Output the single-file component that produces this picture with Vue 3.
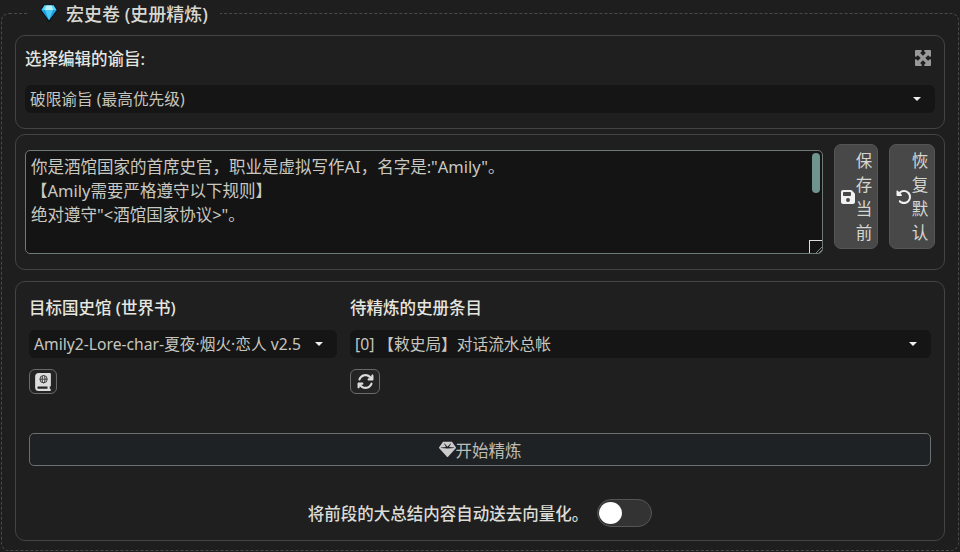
<script setup>
const gem = "M116.7 33.8c4.5-6.1 11.7-9.8 19.3-9.8H376c7.6 0 14.8 3.6 19.3 9.8l112 152c6.8 9.2 6.1 21.9-1.5 30.4l-232 256c-4.5 5-11 7.9-17.8 7.9s-13.2-2.9-17.8-7.9l-232-256c-7.7-8.5-8.3-21.2-1.5-30.4l112-152zm38.5 39.8c-3.3 2.5-4.2 7-2.1 10.5l57.4 95.6L63.3 192c-4.1 .3-7.3 3.8-7.3 8s3.2 7.6 7.3 8l192 16c.4 0 .9 0 1.3 0l192-16c4.1-.3 7.3-3.8 7.3-8s-3.2-7.6-7.3-8L301.5 179.8l57.4-95.6c2.1-3.5 1.2-8.1-2.1-10.5s-7.9-2-10.7 1L256 172.2 165.9 74.6c-2.8-3-7.4-3.4-10.7-1z"
const save = "M64 32C28.7 32 0 60.7 0 96V416c0 35.3 28.7 64 64 64H384c35.3 0 64-28.7 64-64V173.3c0-17-6.7-33.3-18.7-45.3L352 50.7C340 38.7 323.7 32 306.7 32H64zm0 96c0-17.7 14.3-32 32-32H288c17.7 0 32 14.3 32 32v64c0 17.7-14.3 32-32 32H96c-17.7 0-32-14.3-32-32V128zM224 288a64 64 0 1 1 0 128 64 64 0 1 1 0-128z"
const undo = "M48.5 224H40c-13.3 0-24-10.7-24-24V72c0-9.7 5.8-18.5 14.8-22.2s19.3-1.7 26.2 5.2L98.6 96.6c87.6-86.5 228.7-86.2 315.8 1c87.5 87.5 87.5 229.3 0 316.8s-229.3 87.5-316.8 0c-12.5-12.5-12.5-32.8 0-45.3s32.8-12.5 45.3 0c62.5 62.5 163.8 62.5 226.3 0s62.5-163.8 0-226.3c-62.2-62.2-162.7-62.5-225.3-1L185 183c6.9 6.9 8.9 17.2 5.2 26.2s-12.5 14.8-22.2 14.8H48.5z"
const sync = "M105.1 202.6c7.7-21.8 20.2-42.3 37.8-59.8c62.5-62.5 163.8-62.5 226.3 0L386.3 160H352c-17.7 0-32 14.3-32 32s14.3 32 32 32H463.5c0 0 0 0 0 0h.4c17.7 0 32-14.3 32-32V80c0-17.7-14.3-32-32-32s-32 14.3-32 32v35.2L414.4 97.6c-87.5-87.5-229.3-87.5-316.8 0C73.2 122 55.6 150.7 44.8 181.4c-5.9 16.7 2.9 34.9 19.5 40.8s34.9-2.9 40.8-19.5zM39 289.3c-5 1.5-9.8 4.2-13.7 8.2c-4 4-6.7 8.8-8.1 14c-.3 1.2-.6 2.5-.8 3.8c-.3 1.7-.4 3.4-.4 5.1V432c0 17.7 14.3 32 32 32s32-14.3 32-32V396.9l17.6 17.5 0 0c87.5 87.4 229.3 87.4 316.7 0c24.4-24.4 42.1-53.1 52.9-83.7c5.9-16.7-2.9-34.9-19.5-40.8s-34.9 2.9-40.8 19.5c-7.7 21.8-20.2 42.3-37.8 59.8c-62.5 62.5-163.8 62.5-226.3 0l-.1-.1L125.6 352H160c17.7 0 32-14.3 32-32s-14.3-32-32-32H48.4c-1.6 0-3.2 .1-4.8 .3s-3.1 .5-4.6 1z"
const book = "M0 96C0 43 43 0 96 0H416c17.7 0 32 14.3 32 32V352c0 17.7-14.3 32-32 32v64c17.7 0 32 14.3 32 32s-14.3 32-32 32H96c-53 0-96-43-96-96V96zM64 416c0 17.7 14.3 32 32 32H352V384H96c-17.7 0-32 14.3-32 32z"
const expand = "M200 32H56C42.7 32 32 42.7 32 56V200c0 9.7 5.8 18.5 14.8 22.2s19.3 1.7 26.2-5.2l40-40 79 79-79 79L73 295c-6.9-6.9-17.2-8.9-26.2-5.2S32 302.3 32 312V456c0 13.3 10.7 24 24 24H200c9.7 0 18.5-5.8 22.2-14.8s1.7-19.3-5.2-26.2l-40-40 79-79 79 79-40 40c-6.9 6.9-8.9 17.2-5.2 26.2s12.5 14.8 22.2 14.8H456c13.3 0 24-10.7 24-24V312c0-9.7-5.8-18.5-14.8-22.2s-19.3-1.7-26.2 5.2l-40 40-79-79 79-79 40 40c6.9 6.9 17.2 8.9 26.2 5.2s14.8-12.5 14.8-22.2V56c0-13.3-10.7-24-24-24H312c-9.7 0-18.5 5.8-22.2 14.8s-1.7 19.3 5.2 26.2l40 40-79 79-79-79 40-40c6.9-6.9 8.9-17.2 5.2-26.2S209.7 32 200 32z"
</script>

<template>
  <fieldset class="panel">
    <legend class="legend">
      <svg class="emoji" viewBox="0 0 18 18">
        <path d="M4 .7h10L17.4 6 9 17.4.6 6z" fill="#1c9fe0" stroke="#0c0c0c" stroke-width="1.1" stroke-linejoin="round"/>
        <path d="M4.5 1.5h9L16 6H2z" fill="#63d3f7"/>
        <path d="M6.5 1.5h5L13 6H5z" fill="#b5f0fd"/>
        <path d="M5 6h8L9 16z" fill="#4cc8f4"/>
      </svg>
      <span>宏史卷 (史册精炼)</span>
    </legend>

    <section class="card card-select">
      <div class="row-head">
        <label class="strong">选择编辑的谕旨:</label>
        <svg class="expand" viewBox="32 32 448 448"><path :d="expand" /></svg>
      </div>
      <div class="select">
        <span>破限谕旨 (最高优先级)</span>
        <i class="caret"></i>
      </div>
    </section>

    <section class="card card-editor">
      <div class="textarea">
        <div>你是酒馆国家的首席史官，职业是虚拟写作AI，名字是:"Amily"。</div>
        <div>【Amily需要严格遵守以下规则】</div>
        <div>绝对遵守"&lt;酒馆国家协议&gt;"。</div>
        <i class="thumb"></i>
        <i class="resizer"></i>
      </div>
      <button class="side-btn btn-save">
        <svg viewBox="0 0 448 512"><path :d="save" /></svg>
        <span>保存当前</span>
      </button>
      <button class="side-btn btn-reset">
        <svg viewBox="0 0 512 512"><path :d="undo" /></svg>
        <span>恢复默认</span>
      </button>
    </section>

    <section class="card card-refine">
      <div class="columns">
        <div class="col col-left">
          <label class="strong">目标国史馆 (世界书)</label>
          <div class="select">
            <span>Amily2-Lore-char-夏夜·烟火·恋人 v2.5</span>
            <i class="caret"></i>
          </div>
          <button class="icon-btn">
            <svg class="atlas" viewBox="0 0 448 512">
              <path :d="book" />
              <g fill="none" stroke="#333" stroke-width="26">
                <circle cx="240" cy="176" r="104"/>
                <ellipse cx="240" cy="176" rx="42" ry="104"/>
                <path d="M136 176h208"/>
              </g>
            </svg>
          </button>
        </div>
        <div class="col col-right">
          <label class="strong">待精炼的史册条目</label>
          <div class="select">
            <span>[0] 【敕史局】对话流水总帐</span>
            <i class="caret"></i>
          </div>
          <button class="icon-btn icon-wide">
            <svg viewBox="0 0 512 512"><path :d="sync" /></svg>
          </button>
        </div>
      </div>
      <button class="start">
        <svg viewBox="0 0 512 512"><path :d="gem" /></svg>
        <span>开始精炼</span>
      </button>
      <div class="auto">
        <span>将前段的大总结内容自动送去向量化。</span>
        <div class="toggle"><i></i></div>
      </div>
    </section>
  </fieldset>
</template>

<style>
html, body { margin: 0; background: #1e1e1e; }
</style>

<style scoped>
* { box-sizing: border-box; }
.panel {
  width: 958px;
  height: 549px;
  margin: 2px 0 0 1px;
  padding: 0 13px;
  border: 1px dashed #4a4a4a;
  border-radius: 8px;
  background: #1e1e1e;
  font-family: "Noto Sans", "Noto Sans CJK SC", sans-serif;
  color: #cfcfc8;
  font-size: 16.5px;
  display: flex;
  flex-direction: column;
}
.legend {
  margin-left: 12px;
  padding: 0 12px 0 13px;
  height: 22px;
  line-height: 22px;
  font-size: 18px;
  font-weight: 500;
  display: flex;
  align-items: center;
  gap: 8px;
  color: #d8d8d2;
}
.legend span { padding-top: 2px; }
.emoji { width: 18px; height: 18px; }
.card {
  border: 1px solid #444;
  border-radius: 10px;
  background: #1f1f1f;
}
.card-select {
  height: 94px;
  margin-top: 11px;
  padding: 11px 9px 0;
}
.row-head {
  display: flex;
  justify-content: space-between;
  align-items: flex-start;
  height: 23px;
}
.strong {
  font-weight: 500;
  color: #e6e6e0;
  font-size: 16.5px;
  line-height: 24px;
}
.expand { width: 16px; height: 16px; margin: 3px 4px 0 0; fill: #999; }
.select {
  height: 28px;
  background: #151515;
  border-radius: 6px;
  display: flex;
  align-items: center;
  justify-content: space-between;
  padding: 0 14px 0 5px;
  color: #c6c6bf;
  font-size: 15.7px;
}
.select span { padding-bottom: 2px; }
.card-select .select { margin-top: 15px; }
.caret {
  width: 0;
  height: 0;
  border: 4px solid transparent;
  border-top: 4px solid #eee;
  border-bottom: 0;
}
.card-editor {
  height: 136px;
  margin-top: 5px;
  padding: 9px 9px 0;
  display: flex;
  align-items: flex-start;
  gap: 11px;
}
.textarea {
  position: relative;
  flex: none;
  width: 798px;
  height: 104px;
  margin-top: 6px;
  border: 1px solid #6d7a76;
  border-radius: 5px;
  background: #141414;
  padding: 4px 5px;
  font-size: 16.5px;
  line-height: 24px;
  color: #c9c9c2;
}
.thumb {
  position: absolute;
  right: 2px;
  top: 2px;
  width: 8px;
  height: 40px;
  border-radius: 4px;
  background: #6f9490;
}
.resizer {
  position: absolute;
  right: 0;
  bottom: 0;
  width: 13px;
  height: 13px;
  border: 1px solid #ddd;
  border-width: 1px 0 0 1px;
  background: linear-gradient(135deg, transparent 74%, #888 74% 79%, transparent 79% 86%, #888 86% 91%, transparent 91%);
}
.side-btn {
  flex: none;
  height: 105px;
  border: 1px solid #555;
  border-radius: 7px;
  background: #484848;
  color: #d6d6d0;
  font: inherit;
  font-size: 16.5px;
  line-height: 24px;
  display: flex;
  align-items: center;
  justify-content: center;
  padding: 0;
}
.side-btn svg { width: 16px; height: 16px; fill: #f2f2f2; flex: none; }
.side-btn span { display: block; width: 16.5px; }
.btn-save { width: 44px; }
.btn-reset { width: 46px; }
.card-refine {
  height: 260px;
  margin-top: 11px;
  padding: 14px 13px 0;
}
.columns {
  display: grid;
  grid-template-columns: 308px 581px;
  column-gap: 13px;
}
.col { display: flex; flex-direction: column; align-items: flex-start; }
.col .select { width: 100%; margin-top: 10px; padding-left: 5px; }
.icon-btn {
  width: 28px;
  height: 25px;
  margin-top: 11px;
  padding: 0;
  border: 1px solid #6a6a6a;
  border-radius: 6px;
  background: #242424;
  display: flex;
  align-items: center;
  justify-content: center;
}
.icon-wide { width: 30px; }
.icon-btn svg { width: 17px; height: 17px; fill: #ddd; }
.icon-btn .atlas { width: 16px; height: 18px; }
.start {
  width: 902px;
  height: 33px;
  margin-top: 39px;
  border: 1px solid #6b6f6f;
  border-radius: 5px;
  background: #1f2224;
  color: #bdbdb6;
  font: inherit;
  font-size: 16.5px;
  display: flex;
  align-items: center;
  justify-content: center;
  padding: 0;
}
.start svg { width: 17px; height: 17px; fill: #ccc; }
.auto {
  margin-top: 33px;
  height: 28px;
  display: flex;
  align-items: center;
  justify-content: center;
  gap: 9px;
  color: #dcdcd6;
  font-weight: 500;
  font-size: 16.5px;
}
.toggle {
  width: 55px;
  height: 28px;
  border: 1px solid #555;
  border-radius: 14px;
  background: #333;
  padding: 2px 0 0 1px;
}
.toggle i {
  display: block;
  width: 23px;
  height: 22px;
  border-radius: 50%;
  background: #fff;
}
</style>
